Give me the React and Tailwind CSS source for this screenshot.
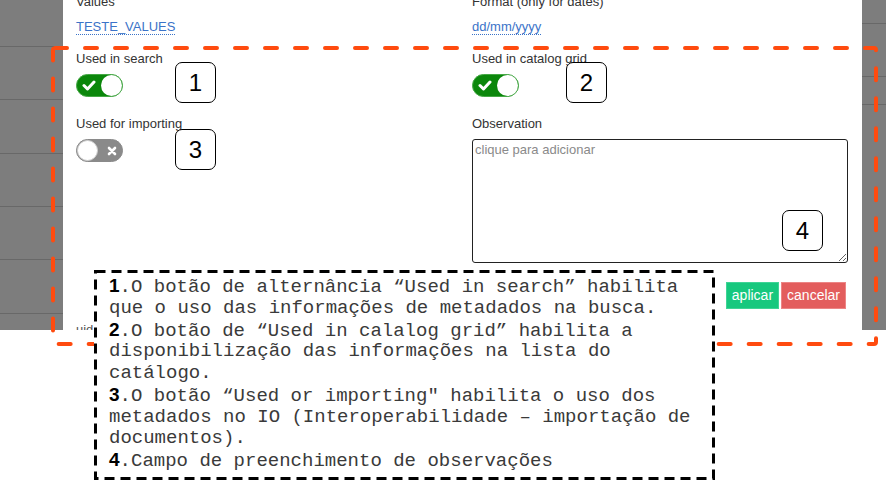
import { useState } from 'react'

const notas = [
    ['1', '.O botão de alternância “Used in search” habilita'],
    [null, 'que o uso das informações de metadados na busca.'],
    ['2', '.O botão de “Used in calalog grid” habilita a'],
    [null, 'disponibilização das informações na lista do'],
    [null, 'catálogo.'],
    ['3', '.O botão “Used or importing" habilita o uso dos'],
    [null, 'metadados no IO (Interoperabilidade – importação de'],
    [null, 'documentos).'],
    ['4', '.Campo de preenchimento de observações'],
]

function Toggle({ ligado }) {
    if (ligado) {
        return (
            <div className="relative h-[23px] w-[47px] rounded-full border border-[#45a845] bg-[#0b870b]">
                <svg className="absolute left-[5px] top-[5px]" width="14" height="11" viewBox="0 0 14 11">
                    <path d="M2 5.5 L5.5 9 L12 2" fill="none" stroke="white" strokeWidth="3" strokeLinecap="round" strokeLinejoin="round" />
                </svg>
                <div className="absolute right-0 top-0 h-[21px] w-[21px] rounded-full bg-white" />
            </div>
        )
    }
    return (
        <div className="relative h-[23px] w-[47px] rounded-full border border-[#8a8a8a] bg-[#8a8a8a]">
            <div className="absolute left-0 top-0 h-[21px] w-[21px] rounded-full border border-[#cfcfcf] bg-white" />
            <svg className="absolute left-[30px] top-[6px]" width="10" height="10" viewBox="0 0 10 10">
                <path d="M2 2 L8 8 M8 2 L2 8" stroke="white" strokeWidth="2.6" strokeLinecap="round" />
            </svg>
        </div>
    )
}

function Numero({ n, className }) {
    return (
        <div className={`absolute flex h-[41px] w-[41px] items-center justify-center rounded-[7px] border border-black bg-white text-[24px] text-black ${className}`}>
            {n}
        </div>
    )
}

function LinhasFundo({ alturas }) {
    return (
        <div className="flex flex-col">
            {alturas.map((h, i) => (
                <div key={i} className="border-b border-[#686868]" style={{ height: h }} />
            ))}
        </div>
    )
}

export default function App() {
    const [obs, setObs] = useState('')

    return (
        <div className="relative h-[482px] w-[886px] overflow-hidden bg-white font-['Liberation_Sans',Arial,sans-serif]">
            <div className="flex h-[330px]">
                <div className="w-[63px] bg-[#7d7d7d]">
                    <LinhasFundo alturas={[47, 53, 54, 53, 53, 54]} />
                </div>

                <div className="w-[799px] overflow-hidden bg-white pl-[13px] pr-[14px] text-[13px] text-[#333]">
                    <div className="-mt-[6px] grid grid-cols-[376px_376px] gap-x-[20px]">
                        <div className="flex flex-col items-start">
                            <p className="leading-[16px]">Values</p>
                            <span className="mt-[9px] border-b border-dotted border-[#3b73c8] leading-[15px] text-[#3b73c8]">TESTE_VALUES</span>
                            <p className="mt-[16px] leading-[16px]">Used in search</p>
                            <div className="mt-[7px]"><Toggle ligado /></div>
                            <p className="mt-[19px] leading-[16px]">Used for importing</p>
                            <div className="mt-[7px]"><Toggle ligado={false} /></div>
                        </div>
                        <div className="flex flex-col items-start">
                            <p className="leading-[16px]">Format (only for dates)</p>
                            <span className="mt-[9px] border-b border-dotted border-[#3b73c8] leading-[15px] text-[#3b73c8]">dd/mm/yyyy</span>
                            <p className="mt-[16px] leading-[16px]">Used in catalog grid</p>
                            <div className="mt-[7px]"><Toggle ligado /></div>
                            <p className="mt-[19px] leading-[16px]">Observation</p>
                            <textarea
                                value={obs}
                                onChange={(e) => setObs(e.target.value)}
                                placeholder="clique para adicionar"
                                className="mt-[7px] h-[124px] w-[376px] rounded-[3px] border border-[#222] px-[2px] py-[2px] text-[13px] leading-[16px] text-[#333] outline-none placeholder:text-[#8a8a8a]"
                            />
                        </div>
                    </div>

                    <div className="mt-[19px] flex justify-end gap-[2px] pr-[2px]">
                        <button type="button" className="h-[27px] border border-[#3fd496] bg-[#17c87e] px-[5px] text-[14px] text-white">aplicar</button>
                        <button type="button" className="h-[27px] border border-[#ec8585] bg-[#e35d5d] px-[5px] text-[14px] text-white">cancelar</button>
                    </div>
                    <p className="mt-[13px] leading-[16px] text-[#555]">uid</p>
                </div>

                <div className="w-[24px] bg-[#7d7d7d]">
                    <LinhasFundo alturas={[24, 53, 28]} />
                </div>
            </div>

            <Numero n="1" className="left-[175px] top-[62px]" />
            <Numero n="3" className="left-[175px] top-[129px]" />
            <Numero n="2" className="left-[566px] top-[62px]" />
            <Numero n="4" className="left-[782px] top-[210px]" />

            <svg className="absolute left-0 top-0" width="886" height="482">
                <rect x="53" y="48" width="823" height="296" rx="2" fill="none" stroke="#ff4b0f" strokeWidth="4" strokeDasharray="12 18" strokeLinecap="round" />
            </svg>

            <div className="absolute left-[94px] top-[270px] h-[210px] w-[621px] bg-white pl-[15px] pt-[6px] font-['Liberation_Mono','Courier_New',monospace] text-[19px] text-[#3a3a3a]">
                <svg className="absolute left-0 top-0" width="621" height="210">
                    <rect x="1.5" y="1.5" width="618" height="207" fill="none" stroke="black" strokeWidth="3" strokeDasharray="10 6" />
                </svg>
                {notas.map(([n, texto], i) => (
                    <div key={i} className="relative h-[21.75px] overflow-visible whitespace-pre leading-[21.75px]">
                        {n && <b className="font-['Liberation_Sans',Arial,sans-serif] leading-none text-black">{n}</b>}
                        {texto}
                    </div>
                ))}
            </div>
        </div>
    )
}
